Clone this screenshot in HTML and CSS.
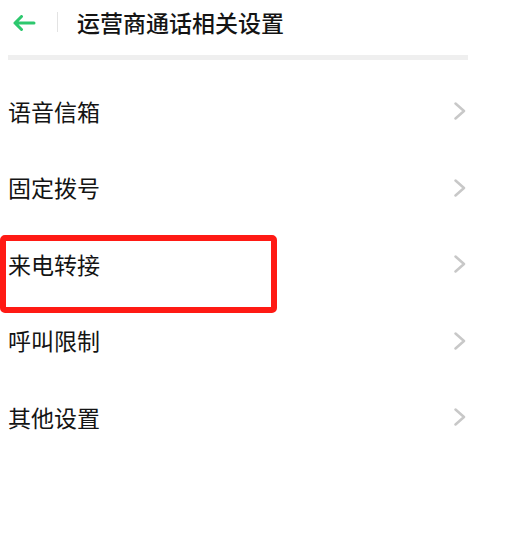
FILE: index.html
```html
<!DOCTYPE html>
<html lang="zh-CN">
<head>
    <meta charset="UTF-8">
    <meta name="viewport" content="width=device-width, initial-scale=1.0">
    <title>运营商通话相关设置</title>
    <link rel="stylesheet" href="styles.css">
</head>
<body>
    <div class="page">
        <!-- Header -->
        <div class="header">
            <button class="back-btn" aria-label="返回">
                <svg width="24" height="16" viewBox="0 0 24 16">
                    <path d="M22 8H3M9.5 1.5L3 8l6.5 6.5" fill="none" stroke="#2dc86e" stroke-width="3" stroke-linecap="round" stroke-linejoin="round"/>
                </svg>
            </button>
            <span class="header-divider"></span>
            <h1 class="header-title">运营商通话相关设置</h1>
        </div>

        <div class="separator"></div>

        <!-- Settings list -->
        <div class="setting-list">
            <div class="setting-item">
                <span class="setting-label">语音信箱</span>
                <svg class="chevron" width="12" height="18" viewBox="0 0 12 18"><path d="M1.5 1.5L10 9l-8.5 7.5"/></svg>
            </div>
            <div class="setting-item">
                <span class="setting-label">固定拨号</span>
                <svg class="chevron" width="12" height="18" viewBox="0 0 12 18"><path d="M1.5 1.5L10 9l-8.5 7.5"/></svg>
            </div>
            <div class="setting-item">
                <span class="setting-label">来电转接</span>
                <svg class="chevron" width="12" height="18" viewBox="0 0 12 18"><path d="M1.5 1.5L10 9l-8.5 7.5"/></svg>
                <div class="highlight-box"></div>
            </div>
            <div class="setting-item">
                <span class="setting-label">呼叫限制</span>
                <svg class="chevron" width="12" height="18" viewBox="0 0 12 18"><path d="M1.5 1.5L10 9l-8.5 7.5"/></svg>
            </div>
            <div class="setting-item">
                <span class="setting-label">其他设置</span>
                <svg class="chevron" width="12" height="18" viewBox="0 0 12 18"><path d="M1.5 1.5L10 9l-8.5 7.5"/></svg>
            </div>
        </div>
    </div>
</body>
</html>
```

FILE: styles.css
```css
* {
    margin: 0;
    padding: 0;
    box-sizing: border-box;
    font-family: "Noto Sans CJK SC", "Noto Sans", sans-serif;
}

body {
    background-color: #fff;
    color: #141414;
}

.page {
    width: 511px;
    height: 557px;
    overflow: hidden;
}

.header {
    display: flex;
    align-items: center;
    height: 44px;
    padding-left: 12px;
}

.back-btn {
    display: flex;
    align-items: center;
    background: none;
    border: none;
    width: 24px;
    height: 16px;
    margin-top: 2px;
    cursor: pointer;
}

.header-divider {
    width: 1px;
    height: 20px;
    background-color: #e3e3e3;
    margin-left: 21px;
}

.header-title {
    font-size: 23px;
    font-weight: 500;
    margin-left: 19px;
    line-height: 1;
}

.separator {
    height: 5px;
    background-color: #efefef;
    margin: 11px 43px 0 8px;
}

.setting-list {
    margin-top: 13px;
    padding: 0 45px 0 8px;
}

.setting-item {
    position: relative;
    display: flex;
    justify-content: space-between;
    align-items: center;
    height: 76.5px;
}

.setting-label {
    font-size: 23px;
    line-height: 1;
}

.chevron path {
    fill: none;
    stroke: #c8c8c8;
    stroke-width: 2.5;
    stroke-linecap: round;
    stroke-linejoin: round;
}

.highlight-box {
    position: absolute;
    left: -8px;
    top: 9px;
    width: 277px;
    height: 78px;
    border: 6px solid #ff1a14;
    border-radius: 5px;
}
```
